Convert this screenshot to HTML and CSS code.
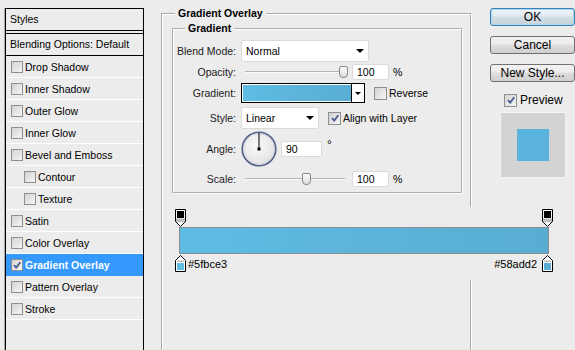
FILE: index.html
```html
<!DOCTYPE html>
<html>
<head>
<meta charset="utf-8">
<title>Layer Style</title>
<link rel="stylesheet" href="styles.css">
</head>
<body>
<div class="dialog">
  <aside class="styles-panel">
    <div class="panel-head">Styles</div>
    <ul class="style-list">
      <li class="blend">Blending Options: Default</li>
      <li class="item"><span class="cb"></span>Drop Shadow</li>
      <li class="item"><span class="cb"></span>Inner Shadow</li>
      <li class="item"><span class="cb"></span>Outer Glow</li>
      <li class="item"><span class="cb"></span>Inner Glow</li>
      <li class="item"><span class="cb"></span>Bevel and Emboss</li>
      <li class="item sub"><span class="cb"></span>Contour</li>
      <li class="item sub"><span class="cb"></span>Texture</li>
      <li class="item"><span class="cb"></span>Satin</li>
      <li class="item"><span class="cb"></span>Color Overlay</li>
      <li class="item active"><span class="cb"><svg class="tick" viewBox="0 0 10 10" width="10" height="10"><path d="M2 5.2L4.2 7.6L8.3 2.2" fill="none" stroke="#4a5a8e" stroke-width="1.8"/></svg></span>Gradient Overlay</li>
      <li class="item"><span class="cb"></span>Pattern Overlay</li>
      <li class="item"><span class="cb"></span>Stroke</li>
    </ul>
  </aside>

  <fieldset class="group outer">
    <legend>Gradient Overlay</legend>
    <div class="outer-body">
      <fieldset class="group inner">
        <legend>Gradient</legend>
        <div class="inner-body">
          <div class="frow r-blend">
            <span class="lbl">Blend Mode:</span>
            <div class="select w-blend"><span>Normal</span><i class="caret"></i></div>
          </div>
          <div class="frow r-opacity">
            <span class="lbl">Opacity:</span>
            <div class="slider"><span class="track"></span><span class="thumb" style="--pos:1"></span></div>
            <span class="num">100</span>
            <span class="unit">%</span>
          </div>
          <div class="frow r-gradient">
            <span class="lbl">Gradient:</span>
            <div class="swatch"><span class="swatch-fill"></span><span class="swatch-drop"><i class="caret small"></i></span></div>
            <label class="check"><span class="cb"></span>Reverse</label>
          </div>
          <div class="frow r-style">
            <span class="lbl">Style:</span>
            <div class="select w-style"><span>Linear</span><i class="caret"></i></div>
            <label class="check"><span class="cb"><svg class="tick" viewBox="0 0 10 10" width="10" height="10"><path d="M2 5.2L4.2 7.6L8.3 2.2" fill="none" stroke="#4a5a8e" stroke-width="1.8"/></svg></span>Align with Layer</label>
          </div>
          <div class="frow r-angle">
            <span class="lbl">Angle:</span>
            <svg class="dial" width="36" height="36" viewBox="0 0 36 36">
              <defs>
                <radialGradient id="dialfill" cx="0.45" cy="0.4" r="0.7">
                  <stop offset="0" stop-color="#fafafa"/>
                  <stop offset="1" stop-color="#dedede"/>
                </radialGradient>
              </defs>
              <circle cx="18" cy="18" r="16.8" fill="url(#dialfill)" stroke="#56628a" stroke-width="1.6"/>
              <circle cx="18" cy="18" r="15.4" fill="none" stroke="#c9cede" stroke-width="0.8"/>
              <line x1="18" y1="2" x2="18" y2="18" stroke="#000" stroke-width="1"/>
              <rect x="16.5" y="16.5" width="3" height="3" fill="#000"/>
            </svg>
            <span class="num w-angle">90</span>
            <span class="deg">°</span>
          </div>
          <div class="frow r-scale">
            <span class="lbl">Scale:</span>
            <div class="slider"><span class="track"></span><span class="thumb" style="--pos:.61"></span></div>
            <span class="num">100</span>
            <span class="unit">%</span>
          </div>
        </div>
      </fieldset>

      <div class="grad-editor">
        <div class="stop-row">
          <svg class="stop" width="11" height="18" viewBox="0 0 11 18"><path d="M0.5 0.5H10.5V12.5L5.5 17.5L0.5 12.5Z" fill="#fff" stroke="#000"/><rect x="2" y="2" width="7" height="7" fill="#000"/><path d="M1 9.5H10V12.3L9 13.3H2L1 12.3Z" fill="#bdbdbd"/></svg>
          <svg class="stop" width="11" height="18" viewBox="0 0 11 18"><path d="M0.5 0.5H10.5V12.5L5.5 17.5L0.5 12.5Z" fill="#fff" stroke="#000"/><rect x="2" y="2" width="7" height="7" fill="#000"/><path d="M1 9.5H10V12.3L9 13.3H2L1 12.3Z" fill="#bdbdbd"/></svg>
        </div>
        <div class="grad-bar"></div>
        <div class="stop-row bottom">
          <div class="stop-item">
            <svg class="stop" width="11" height="17" viewBox="0 0 11 17"><path d="M5.5 0.5L10.5 5.5V16.5H0.5V5.5Z" fill="#fff" stroke="#000"/><path d="M2 5.5H9V7H2Z" fill="#bdbdbd"/><rect x="2" y="8" width="7" height="7" fill="#5fbce3"/></svg>
            <span class="hex">#5fbce3</span>
          </div>
          <div class="stop-item">
            <span class="hex">#58add2</span>
            <svg class="stop" width="11" height="17" viewBox="0 0 11 17"><path d="M5.5 0.5L10.5 5.5V16.5H0.5V5.5Z" fill="#fff" stroke="#000"/><path d="M2 5.5H9V7H2Z" fill="#bdbdbd"/><rect x="2" y="8" width="7" height="7" fill="#58add2"/></svg>
          </div>
        </div>
      </div>
    </div>
  </fieldset>

  <div class="actions">
    <button class="btn default">OK</button>
    <button class="btn">Cancel</button>
    <button class="btn">New Style...</button>
    <label class="check preview-check"><span class="cb"><svg class="tick" viewBox="0 0 10 10" width="10" height="10"><path d="M2 5.2L4.2 7.6L8.3 2.2" fill="none" stroke="#4a5a8e" stroke-width="1.8"/></svg></span>Preview</label>
    <div class="preview"><span class="preview-swatch"></span></div>
  </div>
</div>
</body>
</html>
```

FILE: styles.css
```css
* { box-sizing: border-box; }

html, body { margin: 0; padding: 0; }

body {
  width: 575px;
  height: 350px;
  overflow: hidden;
  background: #ececec;
  color: #000;
  font-family: "Liberation Sans", Arial, sans-serif;
  font-size: 10.5px;
}

.dialog {
  display: flex;
  align-items: flex-start;
  padding: 7px 0 0 5px;
}

/* ---------- left styles list ---------- */
.styles-panel {
  flex: none;
  width: 139px;
  height: 342px;
  margin-top: 1px;
  border-left: 1px solid #000;
  border-right: 1px solid #000;
  box-shadow: -1px 0 0 #a8a8a8;
}

.panel-head {
  height: 23px;
  border-top: 1px solid #000;
  border-bottom: 1px solid #000;
  padding-left: 4px;
  line-height: 21px;
}

.style-list {
  list-style: none;
  margin: 2px 0 0;
  padding: 0;
  border-top: 1px solid #000;
}

.blend {
  height: 22px;
  border-bottom: 1px solid #000;
  padding-left: 4px;
  line-height: 21px;
}

.item {
  display: flex;
  align-items: center;
  gap: 2px;
  height: 22px;
  padding-left: 5px;
  border-bottom: 1px solid #fff;
}

.item.sub { padding-left: 18px; }

.item.active {
  background: #3399ff;
  color: #fff;
  font-weight: bold;
  border-bottom-color: #3399ff;
}

.cb {
  flex: none;
  display: flex;
  align-items: center;
  justify-content: center;
  width: 12px;
  height: 12px;
  border: 1px solid #8e8f8f;
  background: linear-gradient(135deg, #d2d2d2, #f6f6f6);
}

.tick { display: block; }

/* ---------- group boxes ---------- */
.group {
  margin: 0;
  padding: 0;
  min-width: 0;
  border: 2px groove #fff;
}

.group > legend {
  padding: 0 3px;
  font-weight: bold;
  line-height: 13px;
  background: #ececec;
}

.outer {
  flex: none;
  width: 311px;
  height: 343px;
  margin-left: 17px;
  border-bottom: 0;
}

.outer > legend { margin-left: 12px; }

.outer-body { padding: 2px 7px 0 9px; }

.inner { width: 291px; }

.inner > legend { margin-left: 11px; }

.inner-body { padding: 5px 0 5px 0; }

/* ---------- form rows ---------- */
.frow {
  display: flex;
  align-items: center;
}

.lbl {
  flex: none;
  width: 62px;
  margin-right: 5px;
  text-align: right;
  color: #1a1a1a;
}

.r-blend { height: 22px; }
.r-opacity { height: 16px; margin-top: 2px; }
.r-gradient { height: 20px; margin-top: 3px; }
.r-style { height: 22px; margin-top: 4px; }
.r-angle { height: 36px; margin-top: 2px; }
.r-scale { height: 16px; margin-top: 4px; }

.select {
  display: flex;
  align-items: center;
  justify-content: space-between;
  height: 22px;
  padding: 0 4px 1px 4px;
  background: #fff;
  border: 1px solid #dadada;
  border-radius: 2px;
}

.w-blend { width: 128px; }
.w-style { width: 78px; }

.caret {
  width: 0;
  height: 0;
  border-left: 4px solid transparent;
  border-right: 4px solid transparent;
  border-top: 4px solid #000;
}

.caret.small {
  border-left-width: 3px;
  border-right-width: 3px;
  border-top-width: 3px;
}

.slider {
  position: relative;
  flex: none;
  width: 107px;
  height: 16px;
  margin-right: 4px;
}

.track {
  position: absolute;
  left: 4px;
  width: 100px;
  top: 7px;
  height: 2px;
  border-top: 1px solid #b4b4b4;
  border-bottom: 1px solid #fbfbfb;
}

.thumb {
  position: absolute;
  top: 2px;
  left: calc(var(--pos) * 94px + 4px);
  width: 9px;
  height: 12px;
  border: 1px solid #8a8a8a;
  border-radius: 2px 2px 4px 4px;
  background: linear-gradient(#fdfdfd, #dcdcdc);
}

.num {
  flex: none;
  width: 37px;
  height: 16px;
  padding-left: 4px;
  line-height: 15px;
  background: #fff;
  border: 1px solid #dadada;
  border-radius: 2px;
}

.unit { margin-left: 4px; }

.swatch {
  display: flex;
  width: 124px;
  height: 20px;
  border: 1px solid #000;
  background: #fff;
}

.swatch-fill {
  flex: 1;
  margin: 1px 0 1px 1px;
  background: linear-gradient(90deg, #5fbce3, #58add2);
}

.swatch-drop {
  display: flex;
  align-items: center;
  justify-content: center;
  width: 13px;
  border-left: 1px solid #000;
  background: #fff;
}

.check {
  display: flex;
  align-items: center;
  gap: 2px;
}

.check .cb { width: 13px; height: 13px; }

.r-gradient .check { margin-left: 9px; }
.r-style .check { margin-left: 9px; }

.dial { flex: none; margin-right: 4px; }

.w-angle { width: 41px; }

.deg {
  align-self: flex-start;
  margin-top: 7px;
  margin-left: 5px;
  font-size: 12px;
}

/* ---------- gradient editor ---------- */
.grad-editor {
  width: 381px;
  margin-top: 13px;
  padding: 2px 0 8px 3px;
  background: #ececec;
}

.stop-row {
  display: flex;
  justify-content: space-between;
  align-items: center;
}

.stop { display: block; flex: none; }

.grad-bar {
  height: 27px;
  margin: 0 4px 1px 4px;
  border: 1px solid #8c8c8c;
  background: linear-gradient(90deg, #5fbce3, #58add2);
}

.stop-item {
  display: flex;
  align-items: flex-end;
}

.hex {
  font-size: 11px;
  line-height: 13px;
  margin: 0 2px 1px 2px;
}

.stop-item .hex:first-child { margin-right: 5px; }

/* ---------- right actions ---------- */
.actions {
  flex: none;
  width: 85px;
  margin-left: 18px;
  margin-top: 1px;
}

.btn {
  display: block;
  width: 85px;
  height: 18px;
  margin: 0 0 10px;
  padding: 0;
  border: 1px solid #707070;
  border-radius: 3px;
  background: linear-gradient(#f2f2f2 0, #ebebeb 45%, #dddddd 50%, #cfcfcf 100%);
  font-family: "Liberation Sans", Arial, sans-serif;
  font-size: 12px;
  line-height: 16px;
  color: #000;
  text-align: center;
}

.btn.default {
  border-color: #3c7fb1;
  box-shadow: inset 0 0 0 1px #a8d8f4;
  background: linear-gradient(#eef4f8 0, #e2ebf1 45%, #d3dde4 50%, #c6d2da 100%);
}

.preview-check {
  margin: 11px 0 0 14px;
  gap: 3px;
  font-size: 12px;
}

.preview {
  display: flex;
  align-items: center;
  justify-content: center;
  width: 66px;
  height: 66px;
  margin: 5px 0 0 10px;
  background: #d3d3d3;
  border: 1px solid #f4f4f4;
}

.preview-swatch {
  width: 32px;
  height: 32px;
  background: #5bb4db;
}
```
